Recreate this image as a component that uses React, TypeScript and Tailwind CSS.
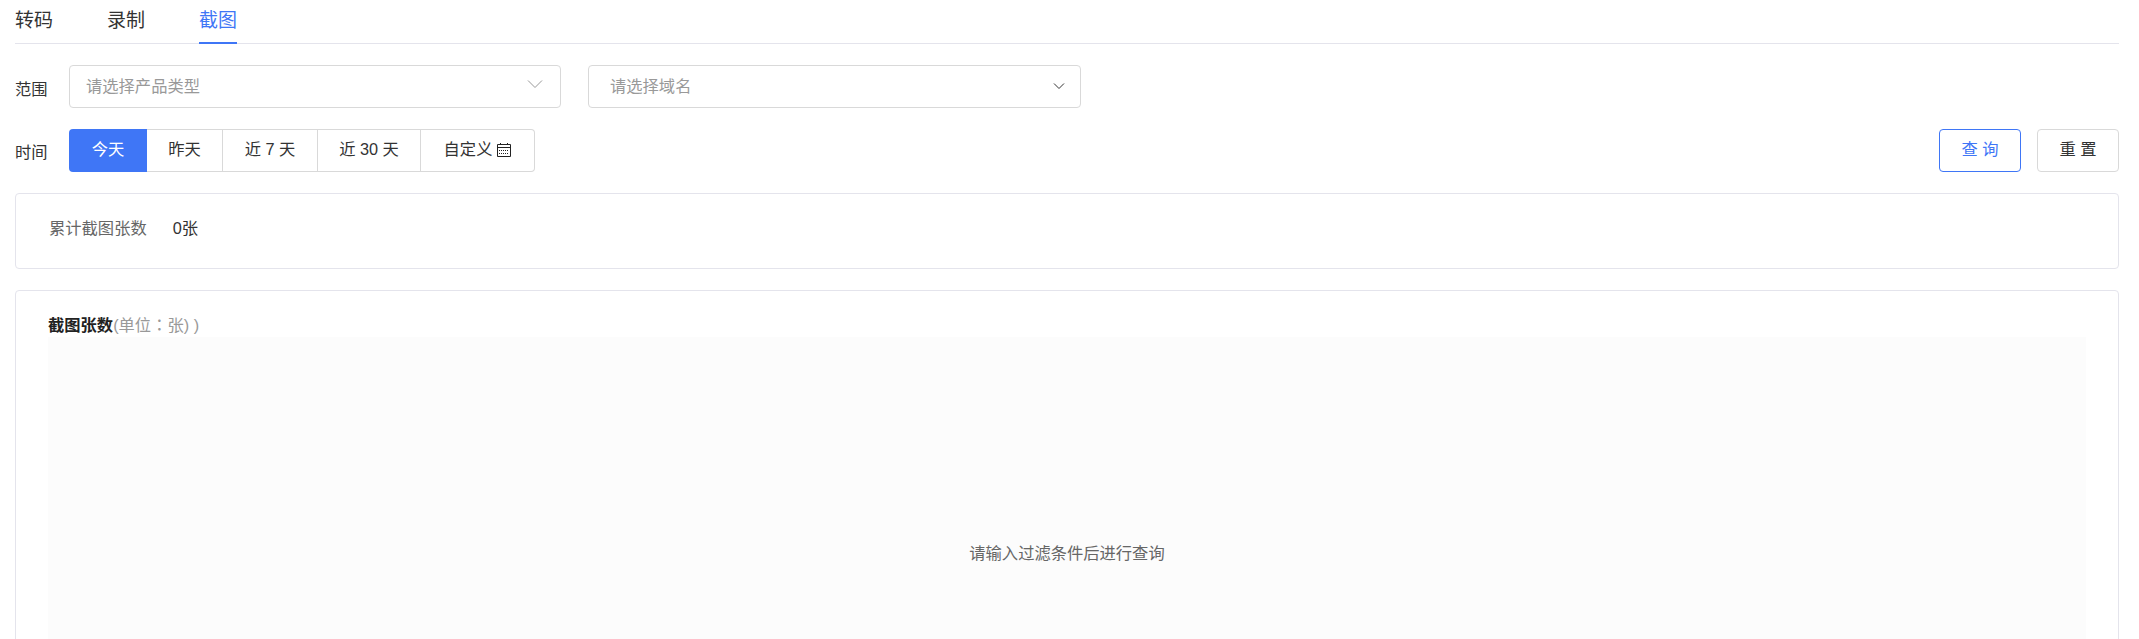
export default function App() {
  const ranges = [
    { label: '昨天', width: 'w-[76px]' },
    { label: '近 7 天', width: 'w-[95px]' },
    { label: '近 30 天', width: 'w-[103px]' },
  ]

  return (
    <div className="h-[639px] overflow-hidden bg-white pl-[15px] pr-[20px] text-[16.3px] text-[#333] font-['Liberation_Sans','Noto_Sans_CJK_SC',sans-serif]">
      {/* Tabs */}
      <div className="flex h-[44px] gap-[54px] border-b border-[#e4e4ec]">
        <div className="h-[44px] text-[19px] leading-[41px]">转码</div>
        <div className="h-[44px] text-[19px] leading-[41px]">录制</div>
        <div className="h-[44px] border-b-2 border-[#3f76f6] text-[19px] leading-[41px] text-[#3f76f6]">截图</div>
      </div>

      {/* Range */}
      <div className="mt-[21px] flex items-center">
        <div className="w-[54px] pt-[6px]">范围</div>
        <div className="flex h-[43px] w-[492px] items-center justify-between rounded border border-[#d9d9d9] pl-[16px] pr-[17px] text-[#999]">
          <span>请选择产品类型</span>
          <svg width="16" height="10" viewBox="0 0 16 10" fill="none" stroke="#999" strokeWidth="1" className="mb-[6px]">
            <path d="M1 1.5l7 7 7-7" />
          </svg>
        </div>
        <div className="ml-[27px] flex h-[43px] w-[493px] items-center justify-between rounded border border-[#d9d9d9] pl-[21px] pr-[15px] text-[#999]">
          <span>请选择域名</span>
          <svg width="12" height="8" viewBox="0 0 12 8" fill="none" stroke="#333" strokeWidth="1" className="mb-[2px]">
            <path d="M1 1.5l5 5 5-5" />
          </svg>
        </div>
      </div>

      {/* Time */}
      <div className="mt-[21px] flex items-center">
        <div className="w-[54px] pt-[4px]">时间</div>
        <div className="flex h-[43px]">
          <div className="flex w-[78px] items-center justify-center rounded-l bg-[#3f76f6] pb-[2px] text-white">今天</div>
          {ranges.map((r) => (
            <div key={r.label} className={`${r.width} flex items-center justify-center border-y border-r border-[#d9d9d9] pb-[2px]`}>
              {r.label}
            </div>
          ))}
          <div className="flex w-[114px] items-center justify-center gap-[5px] rounded-r border-y border-r border-[#d9d9d9] pb-[2px]">
            自定义
            <svg width="14" height="14" viewBox="0 0 14 14" fill="none" stroke="#222" strokeWidth="1">
              <path d="M.5 1.5h13v12H.5zM.5 4.5h13M3.5 0v2M10.5 0v2" />
              <path d="M2 7.5h10M2 10.5h10" strokeDasharray="1 1" />
            </svg>
          </div>
        </div>
        <div className="ml-auto flex gap-[16px]">
          <div className="flex h-[43px] w-[82px] items-center justify-center rounded border border-[#3f76f6] pb-[2px] text-[#3f76f6]">查 询</div>
          <div className="flex h-[43px] w-[82px] items-center justify-center rounded border border-[#d9d9d9] pb-[2px]">重 置</div>
        </div>
      </div>

      {/* Total */}
      <div className="mt-[21px] flex h-[76px] items-center rounded border border-[#e4e4ec] pb-[6px] pl-[33px]">
        <span className="text-[#666]">累计截图张数</span>
        <span className="ml-[26px]">0张</span>
      </div>

      {/* Chart */}
      <div className="mt-[21px] rounded border border-[#e4e4ec] px-[32px] pt-[21px]">
        <div className="h-[25px] leading-[25px]">
          <span className="font-bold text-[#222]">截图张数</span>
          <span className="text-[#999]">(单位<span className="font-['Noto_Sans_CJK_TC',sans-serif]">：</span>张) )</span>
        </div>
        <div className="flex h-[430px] items-center justify-center bg-[#fcfcfc] pt-[2px] text-[#666]">请输入过滤条件后进行查询</div>
      </div>
    </div>
  )
}
